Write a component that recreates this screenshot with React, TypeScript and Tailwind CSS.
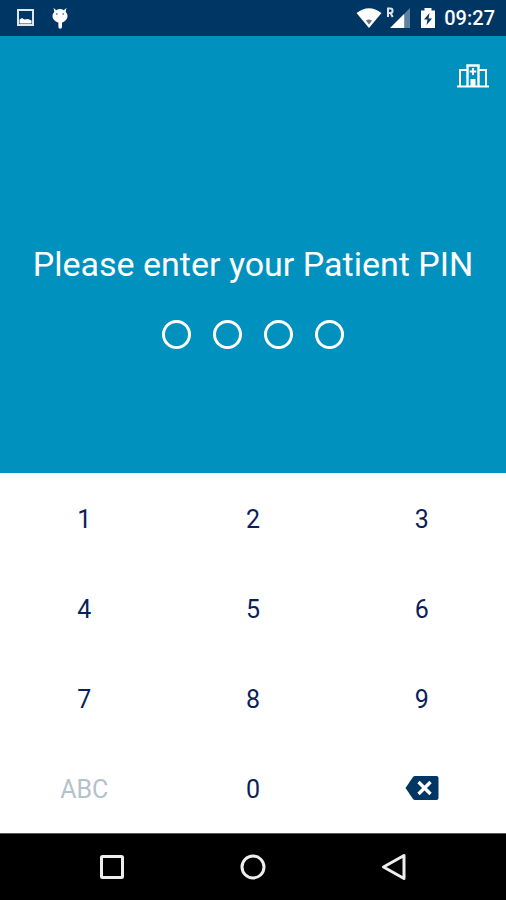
import { useState } from "react";
import clsx from "clsx";

const PIN_LENGTH = 4;
const DIGITS = ["1", "2", "3", "4", "5", "6", "7", "8", "9"];

const keyClass = "flex h-[90px] items-center justify-center text-[25px] leading-8";
const digitClass = "pt-1 text-[#0b1f5c] active:bg-slate-100";

function StatusBar() {
  return (
    <header className="flex h-9 items-center justify-between bg-[#003664] pr-[11px] pl-4 text-white">
      <div className="flex items-center gap-4">
        <svg width="19" height="20" viewBox="0 0 19 20" aria-label="Screenshot saved">
          <rect x="2" y="2" width="15" height="15" fill="none" stroke="#dfe6ee" strokeWidth="2" />
          <path d="M3.500 15.500v-4l2.500-1.500 2.500 1.500 3.500-.5 3.500 1.500v3z" fill="#fff" />
        </svg>
        <svg width="18" height="22" viewBox="0 0 18 22" aria-label="Debugging">
          <path
            d="M2.500 0.800l2.600 2.400a8 8 0 0 1 7.800 0l2.600-2.400-.8 3.900q1.800 2 1.800 4.300c0 3.200-2.600 5.600-5.500 6.600V20a1.800 1.800 0 0 1-3.600 0v-4.400C4.200 14.600 1.500 12.200 1.500 9q0-2.300 1.800-4.300z"
            fill="#fff"
          />
          <circle cx="5.800" cy="7" r="0.900" fill="#6d8aa8" />
          <circle cx="12.200" cy="7" r="0.900" fill="#6d8aa8" />
        </svg>
      </div>

      <div className="flex items-center">
        <svg width="26" height="22" viewBox="0 0 26 22" aria-label="Wi-Fi">
          <path d="M0.500 6Q13-3.500 25.500 6L13 21z" fill="#fff" />
          <path d="M10 13.500q3-2 6 0L13 17.500z" fill="#6b7480" />
        </svg>
        <svg className="ml-1" width="24" height="22" viewBox="0 0 24 22" aria-label="Roaming signal">
          <path d="M24 1v20h-5V6z" fill="#5b83a3" />
          <path d="M18.500 6.500V21H4z" fill="#fff" />
          <path d="M2 10V1.500h2.300a2.100 2.100 0 0 1 0 4.500H2M4.500 6l2.200 4" fill="none" stroke="#dbe4ec" strokeWidth="2" />
        </svg>
        <svg className="ml-[10px]" width="16" height="22" viewBox="0 0 16 22" aria-label="Battery charging">
          <path d="M4.500 1h7v2.500H15V21H1V3.500h3.500z" fill="#fff" />
          <path d="M9.500 6L4 12.500h3.500L6.500 18l5.500-6.500H8.500z" fill="#003664" />
        </svg>
        <time className="ml-2 text-xl leading-6 font-medium">09:27</time>
      </div>
    </header>
  );
}

function HospitalIcon() {
  return (
    <svg width="32" height="24" viewBox="0 0 32 24" fill="none" stroke="#fff" strokeWidth="2">
      <path d="M0 22.500h32" />
      <path d="M3 22V6h7M22 6h7v16" />
      <path d="M10.500 22V1.500h11V22" strokeWidth="2.400" />
      <path d="M16 4v7M12.800 7.500h6.400" />
      <path d="M13.500 22v-7h5v7z" fill="#fff" stroke="none" />
    </svg>
  );
}

function BackspaceIcon() {
  return (
    <svg width="34" height="26" viewBox="0 0 34 26">
      <path d="M10 1h21.500q2 0 2 2v20q0 2-2 2H10q-1.200 0-2-1L0.500 13 8 2q.8-1 2-1z" fill="#003664" />
      <path d="M13.500 7l12 12M25.500 7l-12 12" stroke="#fff" strokeWidth="3.400" />
    </svg>
  );
}

function NavBar() {
  return (
    <nav className="grid h-[67px] grid-cols-3 border-t border-[#555] bg-black px-[42px]">
      <button aria-label="Recent apps" className="flex items-center justify-center">
        <svg width="26" height="26" viewBox="0 0 26 26" fill="none" stroke="#eee" strokeWidth="3">
          <rect x="2.500" y="2.500" width="21" height="21" rx="1" />
        </svg>
      </button>
      <button aria-label="Home" className="flex items-center justify-center">
        <svg width="26" height="26" viewBox="0 0 26 26" fill="none" stroke="#eee" strokeWidth="3">
          <circle cx="13" cy="13" r="11" />
        </svg>
      </button>
      <button aria-label="Back" className="flex items-center justify-center">
        <svg width="26" height="28" viewBox="0 0 26 28" fill="none" stroke="#eee" strokeWidth="3" strokeLinejoin="round">
          <path d="M23 2.500v23L2.500 14z" />
        </svg>
      </button>
    </nav>
  );
}

export default function App() {
  const [pin, setPin] = useState("");

  const press = (digit: string) => setPin((value) => (value + digit).slice(0, PIN_LENGTH));

  return (
    <div className="flex min-h-screen flex-col bg-white font-[Roboto,sans-serif]">
      <StatusBar />

      <main className="flex flex-1 flex-col">
        <section className="flex flex-1 flex-col bg-[#0091bf] text-white">
          <div className="flex justify-end px-[17px] pt-7">
            <button aria-label="Choose hospital">
              <HospitalIcon />
            </button>
          </div>
          <div className="flex flex-1 flex-col items-center justify-center gap-9 pt-8">
            <h1 className="text-center text-[34px] leading-10">Please enter your Patient PIN</h1>
            <div
              role="img"
              aria-label={`${pin.length} of ${PIN_LENGTH} digits entered`}
              className="flex gap-[22px]"
            >
              {Array.from({ length: PIN_LENGTH }, (_, i) => (
                <span
                  key={i}
                  className={clsx(
                    "size-[29px] rounded-full border-3 border-white",
                    i < pin.length && "bg-white"
                  )}
                />
              ))}
            </div>
          </div>
        </section>

        <section aria-label="Keypad" className="grid grid-cols-3">
          {DIGITS.map((digit) => (
            <button key={digit} className={clsx(keyClass, digitClass)} onClick={() => press(digit)}>
              {digit}
            </button>
          ))}
          <button disabled className={clsx(keyClass, "pt-1 text-[#b4c2cd]")}>
            ABC
          </button>
          <button className={clsx(keyClass, digitClass)} onClick={() => press("0")}>
            0
          </button>
          <button
            aria-label="Delete"
            className={keyClass}
            onClick={() => setPin((value) => value.slice(0, -1))}
          >
            <BackspaceIcon />
          </button>
        </section>
      </main>

      <NavBar />
    </div>
  );
}
